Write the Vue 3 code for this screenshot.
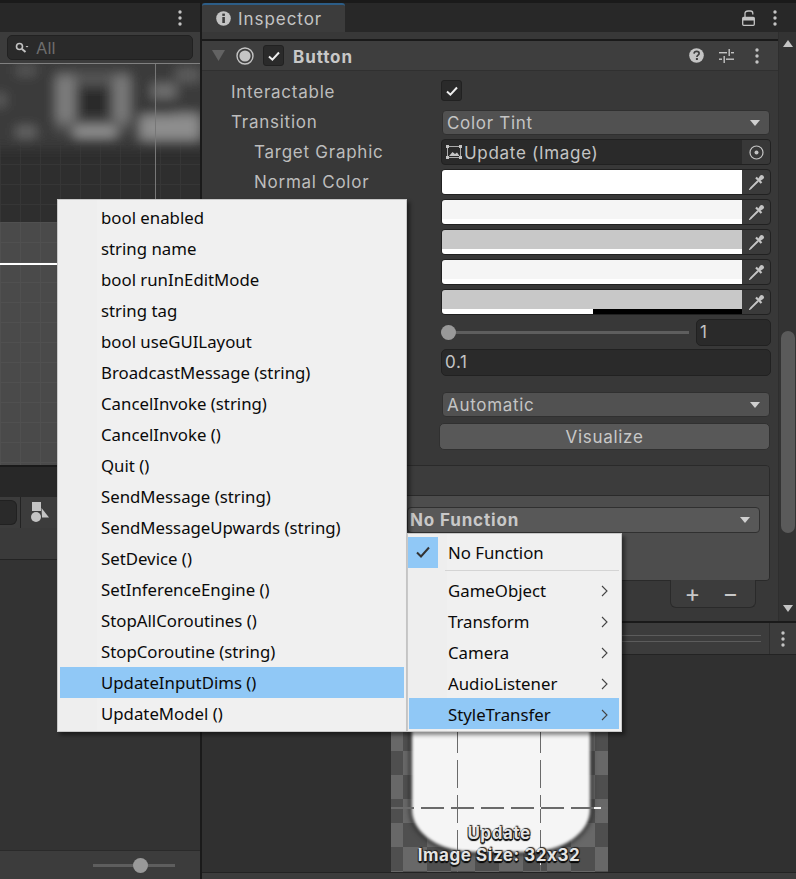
<script setup>
const methods = ['bool enabled','string name','bool runInEditMode','string tag','bool useGUILayout','BroadcastMessage (string)','CancelInvoke (string)','CancelInvoke ()','Quit ()','SendMessage (string)','SendMessageUpwards (string)','SetDevice ()','SetInferenceEngine ()','StopAllCoroutines ()','StopCoroutine (string)','UpdateInputDims ()','UpdateModel ()']
const components = ['GameObject','Transform','Camera','AudioListener','StyleTransfer']
const swatches = [
  { tint: '#ffffff', alpha: 0 },
  { tint: '#f5f5f5', alpha: 0 },
  { tint: '#c8c8c8', alpha: 0 },
  { tint: '#f5f5f5', alpha: 0 },
  { tint: '#c8c8c8', alpha: 149 }
]
</script>

<template>
  <div class="app">
    <section class="left">
      <header class="tabbar left-tabbar">
        <svg class="dots" width="4" height="16" viewBox="0 0 4 16"><circle cx="2" cy="2" r="1.7"/><circle cx="2" cy="8" r="1.7"/><circle cx="2" cy="14" r="1.7"/></svg>
      </header>
      <div class="search-row">
        <div class="search">
          <svg width="14" height="12" viewBox="0 0 14 12" fill="none" stroke="#c4c4c4"><circle cx="4.5" cy="4.5" r="3" stroke-width="1.6"/><path d="M7 7l3.5 3" stroke-width="2"/><path d="M10.5 4h3l-1.5 1.6z" fill="#c4c4c4" stroke="none"/></svg>
          <span>All</span>
        </div>
      </div>
      <div class="canvas">
        <svg class="blur" width="200" height="110" viewBox="0 0 200 110">
          <defs><filter id="bl" x="-20%" y="-20%" width="140%" height="140%"><feGaussianBlur stdDeviation="6"/></filter></defs>
          <g filter="url(#bl)">
            <rect x="-20" y="-20" width="240" height="104" fill="#3a3a3a"/>
            <rect x="56" y="8" width="74" height="60" fill="#565656"/>
            <rect x="56" y="12" width="18" height="46" fill="#7e7e7e"/>
            <rect x="114" y="12" width="16" height="46" fill="#7a7a7a"/>
            <rect x="78" y="22" width="32" height="33" fill="#2a2a2a"/>
            <rect x="74" y="64" width="42" height="8" fill="#a4a4a4"/>
            <rect x="140" y="50" width="60" height="26" fill="#8e8e8e"/>
            <rect x="140" y="42" width="34" height="9" fill="#303030"/>
            <rect x="152" y="20" width="24" height="14" fill="#727272"/>
            <rect x="176" y="4" width="24" height="14" fill="#5e5e5e"/>
            <rect x="16" y="2" width="20" height="9" fill="#5c5c5c"/>
            <rect x="16" y="63" width="20" height="10" fill="#6c6c6c"/>
            <rect x="-8" y="30" width="14" height="12" fill="#5e5e5e"/>
          </g>
        </svg>
        <div class="guide-v"></div>
      </div>
      <div class="canvas-light">
        <div class="guide-h"></div>
      </div>
      <div class="hier-tabs"></div>
      <div class="hier-tools">
        <div class="hier-search"></div>
        <div class="tool-sep"></div>
        <svg class="shapes" width="19" height="20" viewBox="0 0 19 20" fill="#c4c4c4"><rect x="1" y="0" width="9" height="9"/><path d="M10.500 6l7.500 9.500h-7z"/><circle cx="5" cy="15" r="5"/></svg>
      </div>
      <div class="hier-empty"></div>
      <div class="left-body"></div>
      <footer class="left-foot">
        <div class="zoom-slider"><i></i></div>
      </footer>
    </section>

    <section class="right">
      <header class="tabbar">
        <div class="tab">
          <svg width="15" height="15" viewBox="0 0 15 15"><circle cx="7.500" cy="7.500" r="7.300" fill="#c4c4c4"/><rect x="6.300" y="6" width="2.600" height="6" fill="#3c3c3c"/><rect x="6.300" y="2.600" width="2.600" height="2.300" fill="#3c3c3c"/></svg>
          <span>Inspector</span>
        </div>
        <div class="tabbar-tools">
          <svg width="13" height="16" viewBox="0 0 13 16" fill="none" stroke="#c4c4c4" stroke-width="1.300"><path d="M3 7V3.300C3 1.900 4.200 1 6 1h2.500c1.300 0 2.300.8 2.300 2.200V4.500"/><rect x="0.700" y="7.500" width="11.600" height="7.800" rx="1"/><rect x="0.700" y="7.500" width="11.600" height="3" fill="#c4c4c4" stroke="none"/></svg>
          <svg class="dots" width="4" height="16" viewBox="0 0 4 16"><circle cx="2" cy="2" r="1.7"/><circle cx="2" cy="8" r="1.7"/><circle cx="2" cy="14" r="1.7"/></svg>
        </div>
      </header>
      <div class="inspector-wrap">
        <div class="inspector">
          <div class="comp-head">
            <svg class="fold" width="13" height="11" viewBox="0 0 13 11"><path d="M0 0h13L6.500 11z" fill="#636363"/></svg>
            <svg class="round" width="18" height="18" viewBox="0 0 18 18"><circle cx="9" cy="9" r="8" fill="none" stroke="#c4c4c4" stroke-width="1.400"/><circle cx="9" cy="9" r="5.600" fill="#c4c4c4"/></svg>
            <div class="check"><svg width="14" height="12" viewBox="0 0 14 12"><path d="M2 6.500l3.400 3.200L12 2.500" fill="none" stroke="#eee" stroke-width="2"/></svg></div>
            <strong>Button</strong>
            <div class="head-icons">
              <svg class="help" width="15" height="15" viewBox="0 0 15 15"><circle cx="7.500" cy="7.500" r="7.300" fill="#c4c4c4"/><path d="M5 5.600c.2-1.600 1.300-2.200 2.600-2.200 1.500 0 2.500.9 2.500 2 0 1.700-2.200 1.700-2.200 3.500" fill="none" stroke="#3e3e3e" stroke-width="1.700"/><rect x="6.900" y="10" width="2" height="2" fill="#3e3e3e"/></svg>
              <svg class="tune" width="15" height="14" viewBox="0 0 15 14" fill="#c4c4c4"><rect x="0" y="3" width="8" height="1.400"/><rect x="12" y="3" width="3" height="1.400"/><rect x="9.500" y="0" width="1.400" height="7"/><rect x="0" y="9.500" width="3" height="1.400"/><rect x="7" y="9.500" width="8" height="1.400"/><rect x="4.500" y="7" width="1.400" height="7"/></svg>
              <svg class="dots" width="4" height="16" viewBox="0 0 4 16"><circle cx="2" cy="2" r="1.700"/><circle cx="2" cy="8" r="1.700"/><circle cx="2" cy="14" r="1.700"/></svg>
            </div>
          </div>

          <div class="props">
            <div class="row">
              <label>Interactable</label>
              <div class="check row-check"><svg width="14" height="12" viewBox="0 0 14 12"><path d="M2 6.500l3.400 3.200L12 2.500" fill="none" stroke="#eee" stroke-width="2"/></svg></div>
            </div>
            <div class="row">
              <label>Transition</label>
              <div class="dropdown"><span>Color Tint</span><i class="caret"></i></div>
            </div>
            <div class="row">
              <label class="indent">Target Graphic</label>
              <div class="objfield">
                <svg width="16" height="14" viewBox="0 0 16 14"><rect x="1.500" y="1.500" width="13" height="11" fill="none" stroke="#aaa"/><path d="M3 11l3.500-4 2.500 2 2-1.500 2.500 3.500z" fill="#c4c4c4"/><g fill="#c4c4c4"><rect x="0" y="0" width="3" height="3"/><rect x="13" y="0" width="3" height="3"/><rect x="0" y="11" width="3" height="3"/><rect x="13" y="11" width="3" height="3"/></g></svg>
                <span>Update (Image)</span>
                <div class="picker"><svg width="15" height="15" viewBox="0 0 15 15"><circle cx="7.500" cy="7.500" r="6.500" fill="none" stroke="#c4c4c4" stroke-width="1.200"/><circle cx="7.500" cy="7.500" r="2" fill="#c4c4c4"/></svg></div>
              </div>
            </div>
            <div class="row" v-for="(s, i) in swatches" :key="i">
              <label class="indent">{{ i === 0 ? 'Normal Color' : '' }}</label>
              <div class="color">
                <div class="sw">
                  <div class="tint" :style="{ background: s.tint }"></div>
                  <div class="alpha">
                    <b v-if="s.alpha" :style="{ width: s.alpha + 'px' }"></b>
                  </div>
                </div>
                <div class="dropper">
                  <svg width="17" height="17" viewBox="0 0 17 17"><path d="M9.500 7L2.800 13.700 1.500 15.500 3.300 14.200 10 7.500z" fill="#8c8c8c" stroke="#c4c4c4" stroke-width="1.200" stroke-linejoin="round"/><path d="M8 3.500L13.500 9" stroke="#c4c4c4" stroke-width="2.200"/><path d="M10 5L12 1.800C13 .8 14.300.8 15.300 1.700 16.200 2.700 16.200 4 15.200 5L12 7z" fill="#c4c4c4"/></svg>
                </div>
              </div>
            </div>
            <div class="row">
              <label></label>
              <div class="slider"><div class="track"><i></i></div><div class="num">1</div></div>
            </div>
            <div class="row">
              <label></label>
              <div class="num wide">0.1</div>
            </div>
            <div class="row automatic">
              <label></label>
              <div class="dropdown"><span>Automatic</span><i class="caret"></i></div>
            </div>
            <div class="row visualize">
              <button>Visualize</button>
            </div>
          </div>

          <div class="event">
            <div class="event-head"></div>
            <div class="event-body">
              <div class="fn-drop"><span>No Function</span><i class="caret"></i></div>
            </div>
          </div>
          <div class="event-foot"><div class="pm"><span>+</span><span>−</span></div></div>
        </div>
        <aside class="scrollbar">
          <svg width="10" height="7" viewBox="0 0 10 7"><path d="M5 0l5 7H0z" fill="#c4c4c4"/></svg>
          <div class="thumb"></div>
          <svg width="10" height="7" viewBox="0 0 10 7"><path d="M0 0h10L5 7z" fill="#c4c4c4"/></svg>
        </aside>
      </div>
      <div class="preview-head">
        <div class="grip"></div>
        <div class="grip-btn"><svg class="dots" width="4" height="16" viewBox="0 0 4 16"><circle cx="2" cy="2" r="1.700"/><circle cx="2" cy="8" r="1.700"/><circle cx="2" cy="14" r="1.700"/></svg></div>
      </div>
      <div class="preview">
        <div class="checker">
          <div class="sprite"></div>
          <i class="dash v v1"></i>
          <i class="dash v v2"></i>
          <i class="dash h"></i>
          <div class="cap cap1">Update</div>
          <div class="cap cap2">Image Size: 32x32</div>
        </div>
      </div>
      <div class="right-foot"></div>
    </section>

    <div class="menu menu-methods">
      <div class="gutter"></div>
      <div v-for="(m, i) in methods" :key="m" class="item" :class="{ hot: i === 15 }">{{ m }}</div>
    </div>

    <div class="menu menu-comps">
      <div class="gutter"></div>
      <div class="item none">
        <div class="tick"><svg width="16" height="14" viewBox="0 0 16 14"><path d="M2 7.500l4 4L14 2.500" fill="none" stroke="#333" stroke-width="2"/></svg></div>
        <span>No Function</span>
      </div>
      <div class="sep"></div>
      <div v-for="(c, i) in components" :key="c" class="item" :class="{ hot: i === 4 }">
        <span>{{ c }}</span>
        <svg width="7" height="12" viewBox="0 0 7 12"><path d="M1 1l5 5-5 5" fill="none" stroke="#444" stroke-width="1.100"/></svg>
      </div>
    </div>
  </div>
</template>

<style>
html, body { margin: 0; background: #1a1a1a; }
</style>

<style scoped>
.app { position: relative; width: 796px; height: 879px; overflow: hidden; display: flex; gap: 2px; padding-top: 3px; box-sizing: border-box; background: #1a1a1a; font-family: Inter, "Liberation Sans", sans-serif; font-size: 17px; color: #c4c4c4; }
.dots { fill: #c4c4c4; display: block; }

.left { width: 200px; display: flex; flex-direction: column; flex: none; }
.right { flex: 1; min-width: 0; display: flex; flex-direction: column; }

.tabbar { height: 29px; flex: none; background: #282828; display: flex; align-items: center; }
.left-tabbar { justify-content: flex-end; padding-right: 18px; }
.search-row { height: 31px; flex: none; background: #3c3c3c; display: flex; align-items: center; padding: 0 7px; border-bottom: 1px solid #808080; }
.search { flex: 1; height: 23px; background: #2a2a2a; border: 1px solid #212121; border-radius: 5px; display: flex; align-items: center; gap: 7px; padding-left: 7px; font-size: 16.5px; color: #6e6e6e; }

.canvas { height: 158px; flex: none; position: relative; background-color: #2e2e2e; background-image: linear-gradient(#363636 1px, transparent 1px), linear-gradient(90deg, #363636 1px, transparent 1px); background-size: 20px 20px; overflow: hidden; }
.blur { position: absolute; left: 0; top: 0; }
.guide-v { position: absolute; left: 155px; top: 0; bottom: 0; width: 1px; background: #777; }
.canvas-light { height: 243px; flex: none; position: relative; background-color: #4a4a4a; background-image: linear-gradient(#505050 1px, transparent 1px), linear-gradient(90deg, #505050 1px, transparent 1px); background-size: 20px 20px; }
.guide-h { position: absolute; left: 0; right: 0; top: 41px; height: 2px; background: #fff; }

.hier-tabs { height: 32px; flex: none; background: #282828; border-top: 2px solid #1a1a1a; box-sizing: border-box; }
.hier-tools { height: 31px; flex: none; background: #3c3c3c; display: flex; align-items: center; }
.hier-search { width: 16px; height: 23px; background: #2a2a2a; border: 1px solid #212121; border-left: 0; border-radius: 0 6px 6px 0; }
.tool-sep { width: 1px; height: 31px; margin-left: 3px; background: #232323; }
.shapes { margin-left: 10px; margin-top: -2px; }
.hier-empty { height: 31px; flex: none; background: #3a3a3a; border-bottom: 1px solid #232323; }
.left-body { flex: 1; background: #333; }
.left-foot { height: 29px; flex: none; background: #3c3c3c; border-top: 1px solid #2a2a2a; box-sizing: border-box; display: flex; align-items: center; justify-content: flex-end; padding-right: 25px; }
.zoom-slider { position: relative; width: 82px; height: 3px; background: #5e5e5e; }
.zoom-slider i { position: absolute; left: 40px; top: -6px; width: 15px; height: 15px; border-radius: 50%; background: #999; }

.tab { width: 143px; height: 29px; box-sizing: border-box; background: #3c3c3c; border-top: 2px solid #2c5d87; border-radius: 3px 3px 0 0; display: flex; align-items: center; gap: 7px; padding-left: 14px; letter-spacing: .95px; }
.tabbar-tools { margin-left: auto; display: flex; align-items: center; gap: 18px; padding-right: 19px; }

.inspector-wrap { height: 589px; flex: none; display: flex; background: #383838; }
.inspector { flex: 1; min-width: 0; }
.scrollbar { width: 18px; flex: none; background: #333; border-left: 1px solid #2e2e2e; box-sizing: border-box; display: flex; flex-direction: column; align-items: center; padding: 8px 0 9px; }
.scrollbar svg { flex: none; }
.thumb { width: 14px; height: 202px; margin-top: 284px; margin-bottom: auto; border-radius: 7px; background: #5a5a5a; }

.comp-head { height: 32px; margin-top: 7px; box-sizing: border-box; background: #3e3e3e; border-top: 2px solid #1a1a1a; border-bottom: 1px solid #303030; display: flex; align-items: center; padding-left: 10px; }
.round { margin-left: 11px; }
.check { width: 21px; height: 21px; background: #2a2a2a; border: 1px solid #212121; border-radius: 3px; display: flex; align-items: center; justify-content: center; box-sizing: border-box; }
.comp-head .check { margin-left: 9px; }
.comp-head strong { margin-left: 9px; padding-top: 2px; font-weight: 700; font-size: 17px; color: #c8c8c8; letter-spacing: .9px; }
.head-icons { margin-left: auto; display: flex; align-items: center; padding-right: 19px; }
.tune { margin-left: 15px; }
.head-icons .dots { margin-left: 21px; }

.props { display: flex; flex-direction: column; gap: 4px; padding-top: 8px; }
.row { height: 26px; display: flex; align-items: center; padding-right: 7px; }
.row label { width: 210px; padding-left: 29px; padding-bottom: 1px; flex: none; color: #bdbdbd; letter-spacing: .75px; }
.row label.indent { padding-left: 52px; width: 187px; }
.row-check { margin-top: -3px; }
.dropdown { flex: 1; height: 25px; box-sizing: border-box; background: #515151; border: 1px solid #303030; border-radius: 4px; display: flex; align-items: center; justify-content: space-between; padding: 1px 9px 0 4px; margin: 0 1px; letter-spacing: .7px; }
.caret { width: 0; height: 0; border-left: 5px solid transparent; border-right: 5px solid transparent; border-top: 6px solid #d0d0d0; }
.objfield { flex: 1; height: 26px; box-sizing: border-box; background: #2a2a2a; border: 1px solid #212121; border-radius: 4px; display: flex; align-items: center; padding-left: 4px; gap: 2px; overflow: hidden; letter-spacing: .7px; }
.objfield span { padding-top: 1px; }
.picker { margin-left: auto; width: 28px; height: 100%; background: #383838; display: flex; align-items: center; justify-content: center; }
.color { flex: 1; height: 26px; box-sizing: border-box; border: 1px solid #212121; border-radius: 4px; display: flex; overflow: hidden; background: #3a3a3a; }
.sw { width: 300px; display: flex; flex-direction: column; }
.tint { flex: 1; }
.alpha { height: 5px; background: #fff; display: flex; justify-content: flex-end; }
.alpha b { display: block; height: 5px; background: #000; }
.dropper { flex: 1; display: flex; align-items: center; justify-content: center; }
.slider { flex: 1; display: flex; align-items: center; }
.track { position: relative; width: 248px; height: 3px; background: #5e5e5e; }
.track i { position: absolute; left: 0; top: -6px; width: 15px; height: 15px; border-radius: 50%; background: #999; }
.num { width: 75px; height: 27px; margin-left: 7px; box-sizing: border-box; background: #2a2a2a; border: 1px solid #212121; border-radius: 5px; padding: 0 3px; line-height: 25px; letter-spacing: .7px; }
.num.wide { flex: 1; width: auto; margin-left: 0; }
.automatic { margin-top: 12px; }
.visualize { height: 27px; margin-top: 2px; justify-content: flex-end; }
.visualize button { width: 331px; height: 27px; margin-right: 1px; background: #585858; border: 1px solid #303030; border-radius: 5px; color: #c8c8c8; font: inherit; letter-spacing: .7px; }

.event { margin: 15px 8px 0 15px; height: 116px; box-sizing: border-box; border: 1px solid #2a2a2a; border-radius: 4px; overflow: hidden; }
.event-head { height: 29px; background: #3c3c3c; border-bottom: 1px solid #2a2a2a; }
.event-body { height: 85px; background: #4d4d4d; padding-top: 11px; box-sizing: border-box; }
.fn-drop { margin-left: 189px; margin-right: 9px; height: 26px; box-sizing: border-box; background: #585858; border: 1px solid #303030; border-radius: 4px; display: flex; align-items: center; justify-content: space-between; padding: 0 9px 0 2px; font-weight: 700; font-size: 17px; letter-spacing: .85px; color: #c8c8c8; }
.event-foot { display: flex; justify-content: flex-end; padding-right: 22px; }
.pm { width: 86px; height: 28px; box-sizing: border-box; background: #3c3c3c; border: 1px solid #2a2a2a; border-top: 0; border-radius: 0 0 6px 6px; display: flex; align-items: center; justify-content: center; gap: 22px; padding-right: 3px; font-size: 24px; color: #c8c8c8; line-height: 1; margin-top: -1px; }

.preview-head { height: 32px; margin-top: 2px; flex: none; background: #3c3c3c; border-bottom: 1px solid #232323; box-sizing: border-box; display: flex; }
.grip { flex: 1; margin: 12px 8px 0 0; height: 5px; border-top: 1px solid #5c5c5c; border-bottom: 1px solid #5c5c5c; }
.grip-btn { width: 26px; border-left: 1px solid #2e2e2e; display: flex; align-items: center; justify-content: center; }
.preview { height: 217px; flex: none; background: #303030; display: flex; justify-content: center; }
.checker { position: relative; width: 217px; height: 217px; overflow: hidden; background-color: #4f4f4f; background-image: conic-gradient(#686868 25%, transparent 0 50%, #686868 0 75%, transparent 0); background-size: 48px 48px; background-position: -12px 0; }
.sprite { position: absolute; left: 21px; right: 18px; top: -40px; bottom: 20px; background: #f5f5f5; border-radius: 0 0 62px 62px / 0 0 42px 42px; box-shadow: 0 0 4px 2px #222; filter: blur(1.5px); }
.dash { position: absolute; }
.dash.v { top: 0; bottom: 0; width: 1px; background: repeating-linear-gradient(#6a6a6a 0 28px, #f5f5f5 28px 35px); }
.v1 { left: 66px; }
.v2 { left: 149px; }
.dash.h { left: 0; right: 0; top: 152px; height: 2px; background: repeating-linear-gradient(90deg, #6a6a6a 0 23px, #f5f5f5 23px 30px); }
.cap { position: absolute; left: 0; right: 0; text-align: center; color: #e4e4e4; font-family: Inter, "Liberation Sans", sans-serif; font-size: 17px; font-weight: 700; letter-spacing: .55px; text-shadow: 1px 1px 0 #111, -1px 1px 0 #222, 1px -1px 1px #222, 0 2px 1px #000; }
.cap1 { top: 168px; }
.cap2 { top: 190px; }
.right-foot { flex: 1; background: #3c3c3c; border-top: 1px solid #232323; }

.menu { position: absolute; box-sizing: border-box; background: #f0f0f0; border: 1px solid #c8c8c8; box-shadow: 3px 3px 4px rgba(0, 0, 0, .45); font-family: "Noto Sans", "Open Sans", sans-serif; font-size: 16.8px; color: #0a0a0a; }
.gutter { position: absolute; left: 0; top: 0; bottom: 0; width: 39px; background: #eeeeee; }
.menu-methods { left: 57px; top: 199px; width: 350px; height: 533px; padding: 2px 2px 0; }
.menu-methods .item { position: relative; height: 31px; line-height: 32px; padding-left: 41px; }
.hot { background: #90c8f6; }
.menu-comps { left: 407px; top: 533px; width: 215px; height: 199px; padding: 2px 2px 0 1px; }
.menu-comps .item { position: relative; height: 31px; box-sizing: border-box; display: flex; align-items: center; justify-content: space-between; padding: 2px 11px 0 39px; }
.menu-comps .none { justify-content: flex-start; height: 32px; margin-left: -1px; padding: 0; }
.none span { padding-top: 0; }
.tick { width: 30px; height: 31px; background: #90c8f6; display: flex; align-items: center; justify-content: center; margin-right: 10px; }
.sep { position: relative; height: 1px; margin: 2px 0 3px 36px; background: #d4d4d4; }
</style>
